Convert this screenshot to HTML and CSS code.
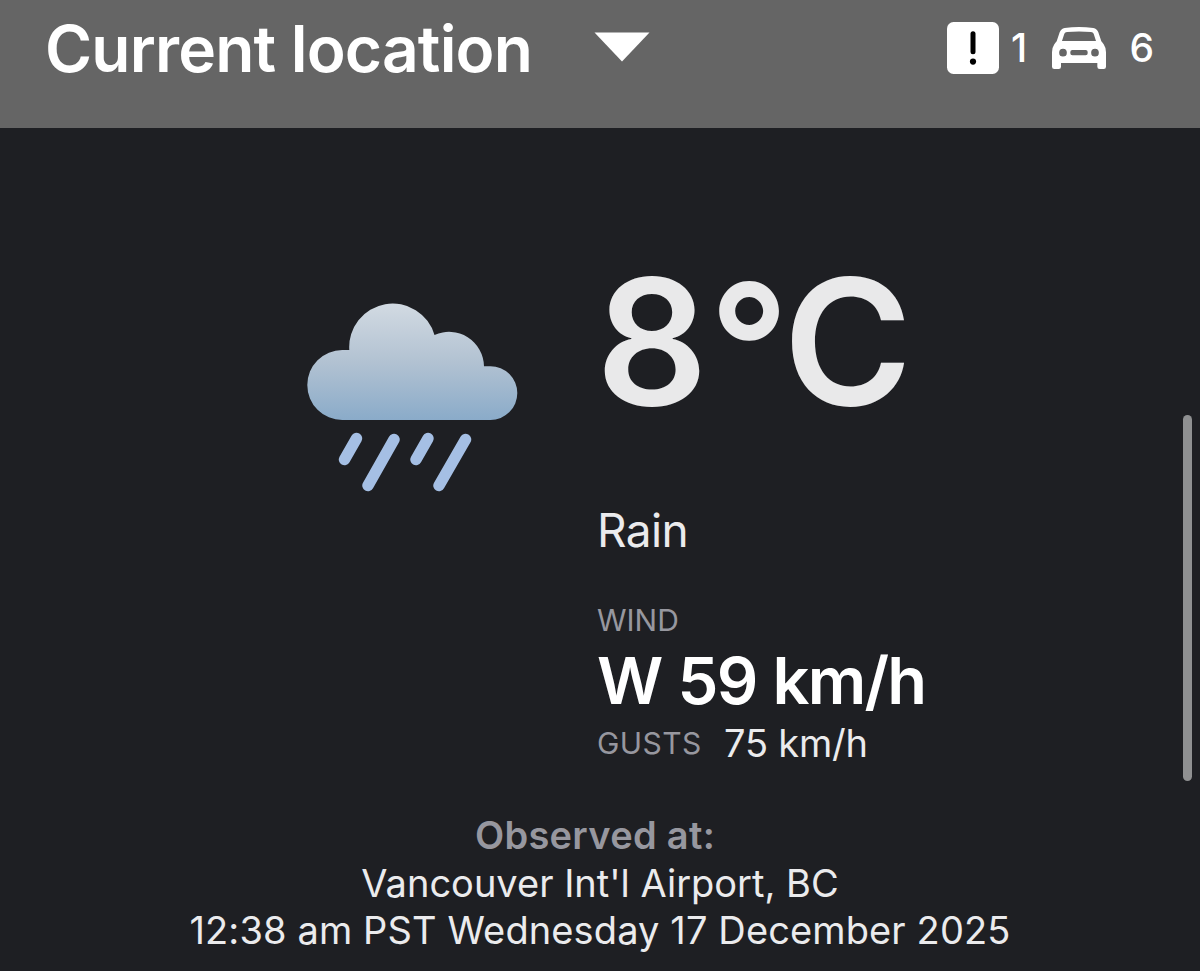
FILE: index.html
```html
<!doctype html>
<html lang="en">
  <head>
    <meta charset="utf-8">
    <title>Current location</title>
    <link rel="stylesheet" href="styles.css">
  </head>
  <body>
    <header>
      <div class="location">
        <h1>Current location</h1>
        <svg class="arrow" viewBox="0 0 56 30">
          <path d="M0.5 0.5H55.5L28 29.5Z" fill="#fff"/>
        </svg>
      </div>
      <div class="alerts">
        <svg class="alert-icon" viewBox="0 0 52 52">
          <rect width="52" height="52" rx="6.5" fill="#fff"/>
          <path d="M26 11.8V29.8" stroke="#000" stroke-width="5" stroke-linecap="round"/>
          <circle cx="26" cy="39.6" r="3.1" fill="#000"/>
        </svg>
        <span class="alert-count">1</span>
        <svg class="car-icon" viewBox="0 0 162 126">
          <path fill="#fff" fill-rule="evenodd" d="M38 3Q81 -3 124 3Q135 5 139 16L148 43Q152 47 155 52Q162 62 162 76V119Q162 126 155 126H143Q136 126 136 119V108H27V119Q27 126 20 126H7Q0 126 0 119V76Q0 62 7 52Q10 47 14 43L23 16Q27 5 38 3ZM45 15Q39 15 37 20L30 42H132L125 20Q123 15 117 15Q81 12 45 15ZM33 65.500A11.500 11.500 0 1 0 33 88.500A11.500 11.500 0 1 0 33 65.500ZM129 65.500A11.500 11.500 0 1 0 129 88.500A11.500 11.500 0 1 0 129 65.500ZM61 69Q55 69 55 75V79Q55 85 61 85H101Q107 85 107 79V75Q107 69 101 69Z"/>
        </svg>
        <span class="car-count">6</span>
      </div>
    </header>
    <main>
      <section class="weather">
        <svg class="weather-icon" viewBox="0 0 211 190">
          <defs>
            <linearGradient id="cloud" x1="0" y1="0" x2="0" y2="1">
              <stop offset="0" stop-color="#d2dae2"/>
              <stop offset="0.5" stop-color="#b2c2d2"/>
              <stop offset="1" stop-color="#8aabc9"/>
            </linearGradient>
          </defs>
          <path fill="url(#cloud)" d="M35.300 117A35 35 0 0 1 35.300 47H42.300A43.500 43.500 0 0 1 127.500 32A35 35 0 0 1 177 63.200H183.400A26.900 26.900 0 0 1 183.400 117Z"/>
          <g stroke="#a5bfe4" stroke-width="11.500" stroke-linecap="round">
            <path d="M49.500 135.500L37.500 156.500"/>
            <path d="M87 136.500L61 182.500"/>
            <path d="M121 135.500L109 156.500"/>
            <path d="M158.500 136.500L132 182.500"/>
          </g>
        </svg>
        <div class="conditions">
          <p class="temperature">8<span class="degree">°</span>C</p>
          <p class="summary">Rain</p>
          <p class="label">WIND</p>
          <p class="wind">W 59 km/h</p>
          <p class="gusts"><span class="label gusts-label">GUSTS</span><span class="gusts-speed">75 km/h</span></p>
        </div>
      </section>
      <section class="observed">
        <h2>Observed at:</h2>
        <p class="station">Vancouver Int'l Airport, BC</p>
        <p class="time">12:38 am PST Wednesday 17 December 2025</p>
      </section>
    </main>
    <div class="scrollbar"></div>
  </body>
</html>
```

FILE: styles.css
```css
* {
  box-sizing: border-box;
}
body {
  margin: 0;
  height: 971px;
  overflow: hidden;
  background-color: #1e1f23;
  color: #ebebed;
  font-family: Inter, "Liberation Sans", sans-serif;
}
h1, h2, p {
  margin: 0;
}
svg {
  display: block;
  flex: none;
}
header {
  display: flex;
  justify-content: space-between;
  align-items: center;
  height: 128px;
  padding: 0 46px 32px 45px;
  background-color: #656565;
  color: #fff;
}
.location {
  display: flex;
  align-items: center;
}
.location h1 {
  width: 549px;
  padding-top: 1px;
  font-size: 64px;
  font-weight: 600;
  line-height: 96px;
  letter-spacing: -0.8px;
  white-space: nowrap;
}
.arrow {
  width: 56px;
  height: 30px;
  margin-bottom: 2px;
}
.alerts {
  display: flex;
  align-items: center;
  font-size: 39px;
  font-weight: 500;
  line-height: 96px;
}
.alert-icon {
  width: 52px;
  height: 52px;
}
.alert-count {
  width: 53px;
  padding-left: 12px;
}
.car-icon {
  width: 54px;
  height: 42px;
}
.car-count {
  width: 48px;
  text-align: right;
}

.weather {
  display: grid;
  grid-template-columns: 597px 1fr;
  padding-top: 113px;
}
.weather-icon {
  width: 211px;
  height: 190px;
  margin: 62px 0 0 307px;
}
.temperature {
  font-size: 175px;
  font-weight: 600;
  line-height: 200px;
  letter-spacing: 1px;
  margin-left: -1px;
  color: #e9e9ea;
}
.degree {
  position: relative;
  top: 4px;
  letter-spacing: -6px;
}
.summary {
  margin-top: 61px;
  font-size: 46px;
  line-height: 56px;
  letter-spacing: -0.6px;
}
.label {
  font-size: 30px;
  line-height: 36px;
  color: #97979f;
}
.conditions > .label {
  margin-top: 44px;
}
.wind {
  margin-top: 4px;
  font-size: 65px;
  font-weight: 600;
  line-height: 78px;
  letter-spacing: -1.8px;
  word-spacing: 1.5px;
  color: #fff;
}
.gusts {
  display: flex;
  align-items: center;
  line-height: 46px;
}
.gusts-label {
  width: 127px;
  letter-spacing: 0.4px;
}
.gusts-speed {
  font-size: 38px;
  letter-spacing: -0.2px;
}

.observed {
  padding-top: 46px;
  text-align: center;
  font-size: 38px;
  line-height: 47.5px;
  white-space: nowrap;
}
.observed h2 {
  padding-right: 10px;
  font-size: 38px;
  font-weight: 600;
  letter-spacing: 0.3px;
  color: #97979f;
}
.time {
  letter-spacing: 0.12px;
}

.scrollbar {
  position: absolute;
  top: 415px;
  right: 8px;
  width: 9px;
  height: 366px;
  border-radius: 5px;
  background-color: #8f9091;
}
```
